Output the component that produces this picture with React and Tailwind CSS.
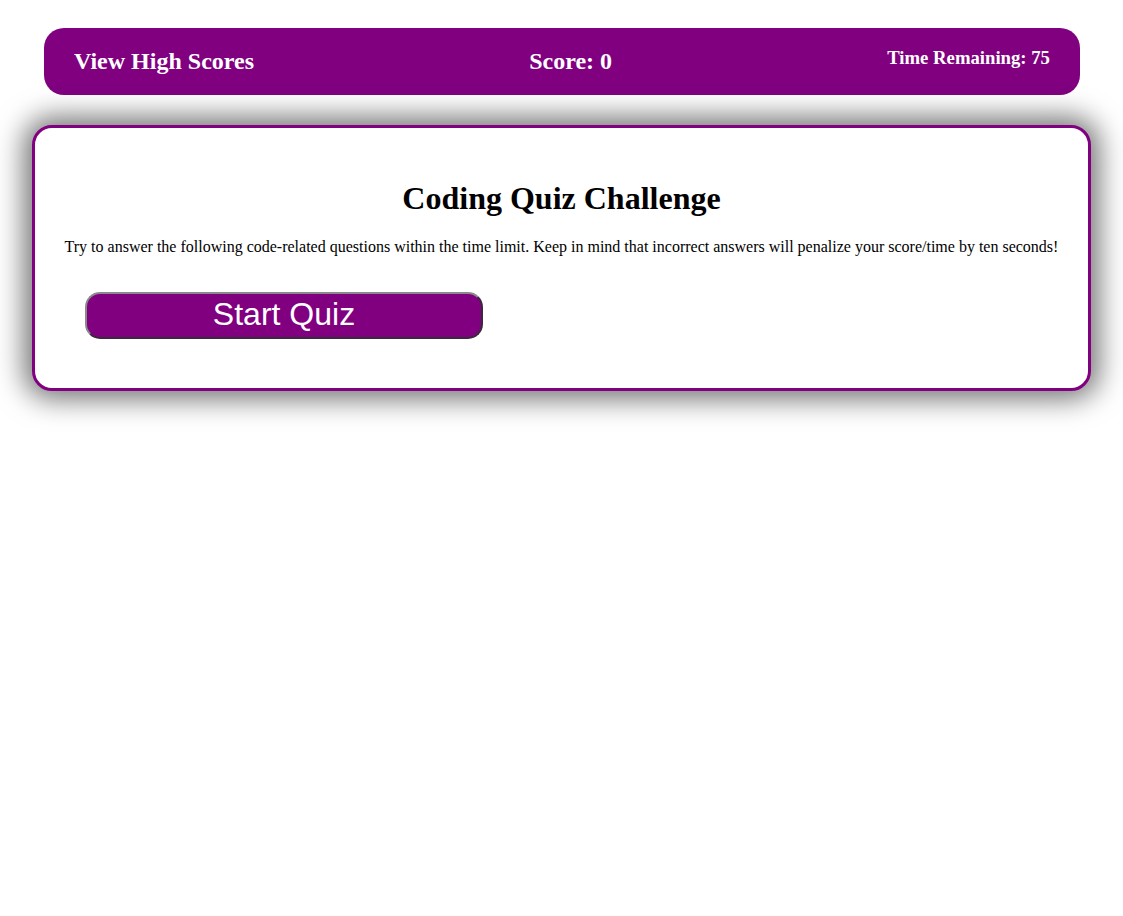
export default function App() {
  return (
    <div className="min-h-screen bg-white font-['Liberation_Serif','Times_New_Roman',serif] text-black">
      <header className="ml-[44px] mr-[43px] mt-[28px] h-[67px] rounded-[20px] bg-[#800080] px-[30px] flex items-center justify-between text-white font-bold">
        <span className="text-[24px] leading-[28px] mb-[1px]">View High Scores</span>
        <span className="text-[24px] leading-[28px] mb-[1px]">Score: 0</span>
        <span className="text-[18.72px] leading-[22px] mb-[8px]">Time Remaining: 75</span>
      </header>

      <main className="ml-[32px] mr-[32px] mt-[30px] rounded-[20px] border-[3px] border-[#800080] bg-white shadow-[0_0_28px_8px_rgba(0,0,0,0.55)] px-[10px] pt-[52px] pb-[49px]">
        <h1 className="text-center text-[32px] leading-[37px] font-bold">Coding Quiz Challenge</h1>
        <p className="mt-[21px] text-center text-[16px] leading-[18px] whitespace-nowrap">
          Try to answer the following code-related questions within the time limit. Keep in mind that incorrect answers will penalize your score/time by ten seconds!
        </p>
        <button className="mt-[36px] ml-[40px] w-[398px] h-[47px] pb-[4px] rounded-[15px] border-2 border-t-[#8a8a8a] border-l-[#8a8a8a] border-b-[#3b2a3b] border-r-[#3b2a3b] bg-[#800080] text-white font-['Liberation_Sans',Arial,sans-serif] text-[32px] leading-none flex items-center justify-center">
          Start Quiz
        </button>
      </main>
    </div>
  )
}
